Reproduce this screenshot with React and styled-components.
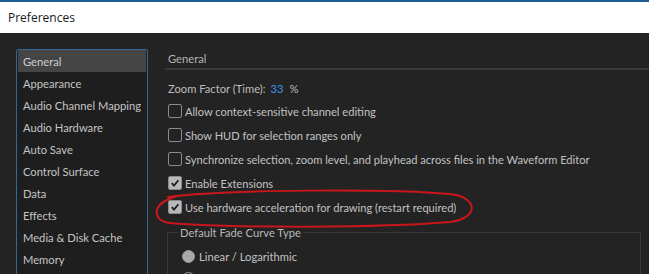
import React from 'react';
import styled, { createGlobalStyle } from 'styled-components';

const GlobalStyle = createGlobalStyle`
  html, body {
    margin: 0;
    padding: 0;
    background: #232323;
    overflow: hidden;
  }
  body {
    font-family: Lato, 'Open Sans', sans-serif;
  }
`;

const Window = styled.div`
  width: 649px;
  height: 274px;
  display: flex;
  flex-direction: column;
  background: #232323;
  position: relative;
  overflow: hidden;
`;

const TitleBar = styled.div`
  height: 31px;
  border-top: 2px solid #1f5d98;
  background: #ffffff;
  display: flex;
  align-items: center;
  padding-left: 8px;
  font-family: 'Open Sans', sans-serif;
  font-size: 12px;
  color: #1a1a1a;
  flex-shrink: 0;
`;

const Body = styled.div`
  display: flex;
  gap: 17px;
  padding: 16px 0 0 16px;
  flex: 1;
`;

const Sidebar = styled.ul`
  list-style: none;
  margin: 0;
  padding: 0 1px;
  width: 128px;
  height: 260px;
  border: 1px solid #2f6a9a;
  border-radius: 2px;
  background: #1e1e1e;
  flex-shrink: 0;
`;

const SideItem = styled.li`
  height: 22px;
  display: flex;
  align-items: center;
  padding-left: 5px;
  font-size: 11.2px;
  color: ${(p) => (p.$active ? '#cfcfcf' : '#c4c4c4')};
  background: ${(p) => (p.$active ? '#454545' : 'transparent')};
  white-space: nowrap;
`;

const Panel = styled.div`
  flex: 1;
  display: flex;
  flex-direction: column;
`;

const PanelHeader = styled.div`
  height: 19px;
  padding-left: 3px;
  display: flex;
  align-items: center;
  font-size: 11.2px;
  color: #b4b4b4;
  border-bottom: 2px solid #3a3a3a;
`;

const ZoomRow = styled.div`
  margin-top: 7px;
  height: 22px;
  display: flex;
  align-items: center;
  padding-left: 3px;
  font-size: 11.2px;
  color: #bdbdbd;
  white-space: nowrap;
`;

const Value = styled.span`
  color: #3a93ea;
  margin: 0 6px 0 5px;
`;

const CheckRow = styled.label`
  height: 24px;
  display: flex;
  align-items: center;
  gap: 3px;
  padding-left: 3px;
  font-size: 11.1px;
  color: #c2c2c2;
  white-space: nowrap;
`;

const Box = styled.span`
  width: 12px;
  height: 12px;
  border: 1px solid #8a8a8a;
  border-radius: 2px;
  background: ${(p) => (p.$checked ? '#b9b9b9' : 'transparent')};
  display: flex;
  align-items: center;
  justify-content: center;
  flex-shrink: 0;
`;

const Group = styled.fieldset`
  margin: 7px 8px 0 2px;
  padding: 6px 0 0 14px;
  border: 1px solid #3a3a3a;
  border-bottom: none;
  min-width: 0;
`;

const Legend = styled.legend`
  padding: 0 2px;
  margin-left: -4px;
  font-size: 11.2px;
  color: #b8b8b8;
`;

const RadioRow = styled.div`
  height: 22px;
  display: flex;
  align-items: center;
  gap: 4px;
  font-size: 11.2px;
  color: #c2c2c2;
`;

const Radio = styled.span`
  width: 11px;
  height: 11px;
  border-radius: 50%;
  border: 1px solid #9a9a9a;
  background: ${(p) => (p.$checked ? '#a9a9a9' : 'transparent')};
  flex-shrink: 0;
`;

const Annotation = styled.svg`
  position: absolute;
  left: 0;
  top: 0;
  pointer-events: none;
`;

const sideItems = [
  'General',
  'Appearance',
  'Audio Channel Mapping',
  'Audio Hardware',
  'Auto Save',
  'Control Surface',
  'Data',
  'Effects',
  'Media & Disk Cache',
  'Memory',
  'Metering',
];

const checks = [
  ['Allow context-sensitive channel editing', false],
  ['Show HUD for selection ranges only', false],
  ['Synchronize selection, zoom level, and playhead across files in the Waveform Editor', false],
  ['Enable Extensions', true],
  ['Use hardware acceleration for drawing (restart required)', true],
];

function Check({ checked }) {
  return (
    <Box $checked={checked}>
      {checked && (
        <svg width="10" height="10" viewBox="0 0 10 10">
          <path d="M1.8 5.2 L4 7.6 L8.4 2.2" fill="none" stroke="#1e1e1e" strokeWidth="1.8" />
        </svg>
      )}
    </Box>
  );
}

export default function App() {
  return (
    <Window>
      <GlobalStyle />
      <TitleBar>Preferences</TitleBar>
      <Body>
        <Sidebar>
          {sideItems.map((name, i) => (
            <SideItem key={name} $active={i === 0}>
              {name}
            </SideItem>
          ))}
        </Sidebar>
        <Panel>
          <PanelHeader>General</PanelHeader>
          <ZoomRow>
            Zoom Factor (Time):<Value>33</Value>%
          </ZoomRow>
          {checks.map(([text, checked]) => (
            <CheckRow key={text}>
              <Check checked={checked} />
              {text}
            </CheckRow>
          ))}
          <Group>
            <Legend>Default Fade Curve Type</Legend>
            <RadioRow>
              <Radio $checked />
              Linear / Logarithmic
            </RadioRow>
            <RadioRow>
              <Radio />
              Cosine (S-Curve)
            </RadioRow>
          </Group>
        </Panel>
      </Body>
      <Annotation width="649" height="274" viewBox="0 0 649 274">
        <path
          d="M168 197 C 230 189, 390 189, 450 194 C 478 197, 480 218, 450 222 C 380 228, 230 228, 170 223 C 152 221, 150 203, 178 196"
          fill="none"
          stroke="#c8161d"
          strokeWidth="2"
          strokeLinecap="round"
        />
      </Annotation>
    </Window>
  );
}
